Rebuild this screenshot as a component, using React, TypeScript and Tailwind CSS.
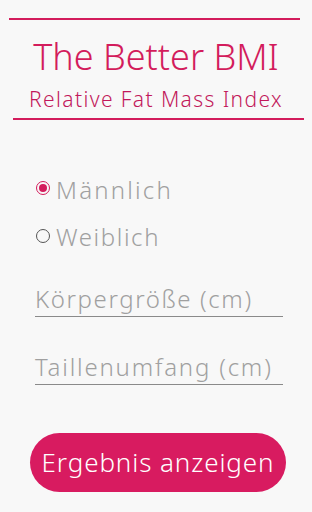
export default function App() {
  const font = { fontFamily: '"Noto Sans", "Liberation Sans", sans-serif' };
  return (
    <div className="w-[312px] h-[512px] bg-[#f8f8f8] overflow-hidden" style={font}>
      <div className="pl-[9px] pr-[12px] pt-[18px]">
        <div className="h-[2px] bg-[#d31c5c]" />
      </div>
      <div className="flex flex-col items-center">
        <h1 className="mt-[17px] text-[36px] leading-[40px] text-[#d31c5c] font-light whitespace-nowrap">
          The Better BMI
        </h1>
        <p className="mt-[8px] text-[21px] leading-[28px] text-[#c2185b] font-light tracking-[1.4px] whitespace-nowrap">
          Relative Fat Mass Index
        </p>
      </div>
      <div className="pl-[13px] pr-[8px] mt-[5px]">
        <div className="h-[2px] bg-[#d31c5c]" />
      </div>

      <div className="pl-[36px] mt-[55px] flex flex-col gap-[17px]">
        <label className="flex items-center gap-[6px]">
          <span className="w-[14px] h-[14px] mt-[-4px] rounded-full border-[1.5px] border-[#d31c5c] flex items-center justify-center">
            <span className="w-[8px] h-[8px] rounded-full bg-[#d31c5c]" />
          </span>
          <span className="text-[24px] leading-[30px] text-[#a0a0a0] font-light tracking-[2.2px]">Männlich</span>
        </label>
        <label className="flex items-center gap-[6px]">
          <span className="w-[14px] h-[14px] mt-[-2px] rounded-full border-[1.5px] border-[#555]" />
          <span className="text-[24px] leading-[30px] text-[#a0a0a0] font-light tracking-[1.6px]">Weiblich</span>
        </label>
      </div>

      <div className="pl-[35px] pr-[29px] mt-[31px] flex flex-col gap-[34px]">
        <div className="border-b border-[#8a8a8a] pb-[1px]">
          <span className="text-[24px] leading-[32px] text-[#a0a0a0] font-light tracking-[1.6px] whitespace-nowrap">Körpergröße (cm)</span>
        </div>
        <div className="border-b border-[#8a8a8a] pb-[1px]">
          <span className="text-[24px] leading-[32px] text-[#a0a0a0] font-light tracking-[1.8px] whitespace-nowrap">Taillenumfang (cm)</span>
        </div>
      </div>

      <div className="pl-[30px] pr-[26px] mt-[48px]">
        <button className="w-full h-[59px] rounded-full bg-[#d81b60] text-white text-[26px] font-light tracking-[0.9px] whitespace-nowrap">
          Ergebnis anzeigen
        </button>
      </div>
    </div>
  );
}
